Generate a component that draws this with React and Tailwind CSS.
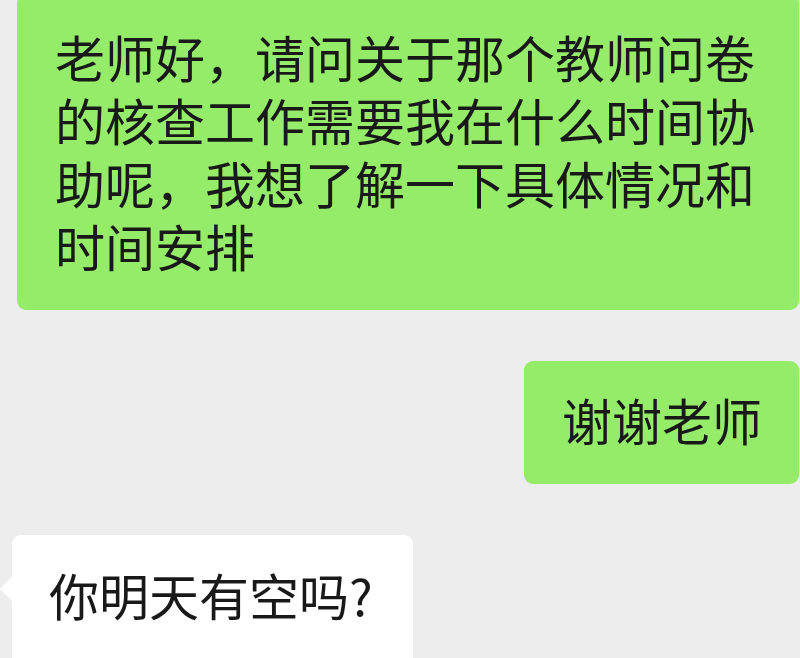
export default function App() {
  return (
    <div
      className="h-[658px] w-[800px] overflow-hidden bg-[#ededed] text-[#191919] flex flex-col"
      style={{ fontFamily: '"Noto Sans CJK SC", "Noto Sans", sans-serif' }}
    >
      {/* 发出的长消息 */}
      <div className="ml-[17px] mr-[1px] mt-[-6px] rounded-[9px] bg-[#95ec69] pl-[38px] pr-[44px] pt-[31px] pb-[33px] text-[50px] leading-[63px] whitespace-nowrap">
        <div>老师好，请问关于那个教师问卷</div>
        <div>的核查工作需要我在什么时间协</div>
        <div>助呢，我想了解一下具体情况和</div>
        <div>时间安排</div>
      </div>

      {/* 发出的短消息 */}
      <div className="mt-[51px] self-end mr-[1px] rounded-[9px] bg-[#95ec69] pl-[38px] pr-[37px] pt-[27px] pb-[33px] text-[50px] leading-[63px] whitespace-nowrap">
        谢谢老师
      </div>

      {/* 收到的消息 */}
      <div className="relative mt-[51px] ml-[12px] w-[401px] rounded-[9px] bg-white pl-[37px] pt-[28px] pb-[40px] text-[50px] leading-[63px] whitespace-nowrap">
        <span className="absolute left-[-12px] top-[42px] h-0 w-0 border-y-[12px] border-r-[12px] border-y-transparent border-r-white" />
        你明天有空吗?
      </div>
    </div>
  )
}
